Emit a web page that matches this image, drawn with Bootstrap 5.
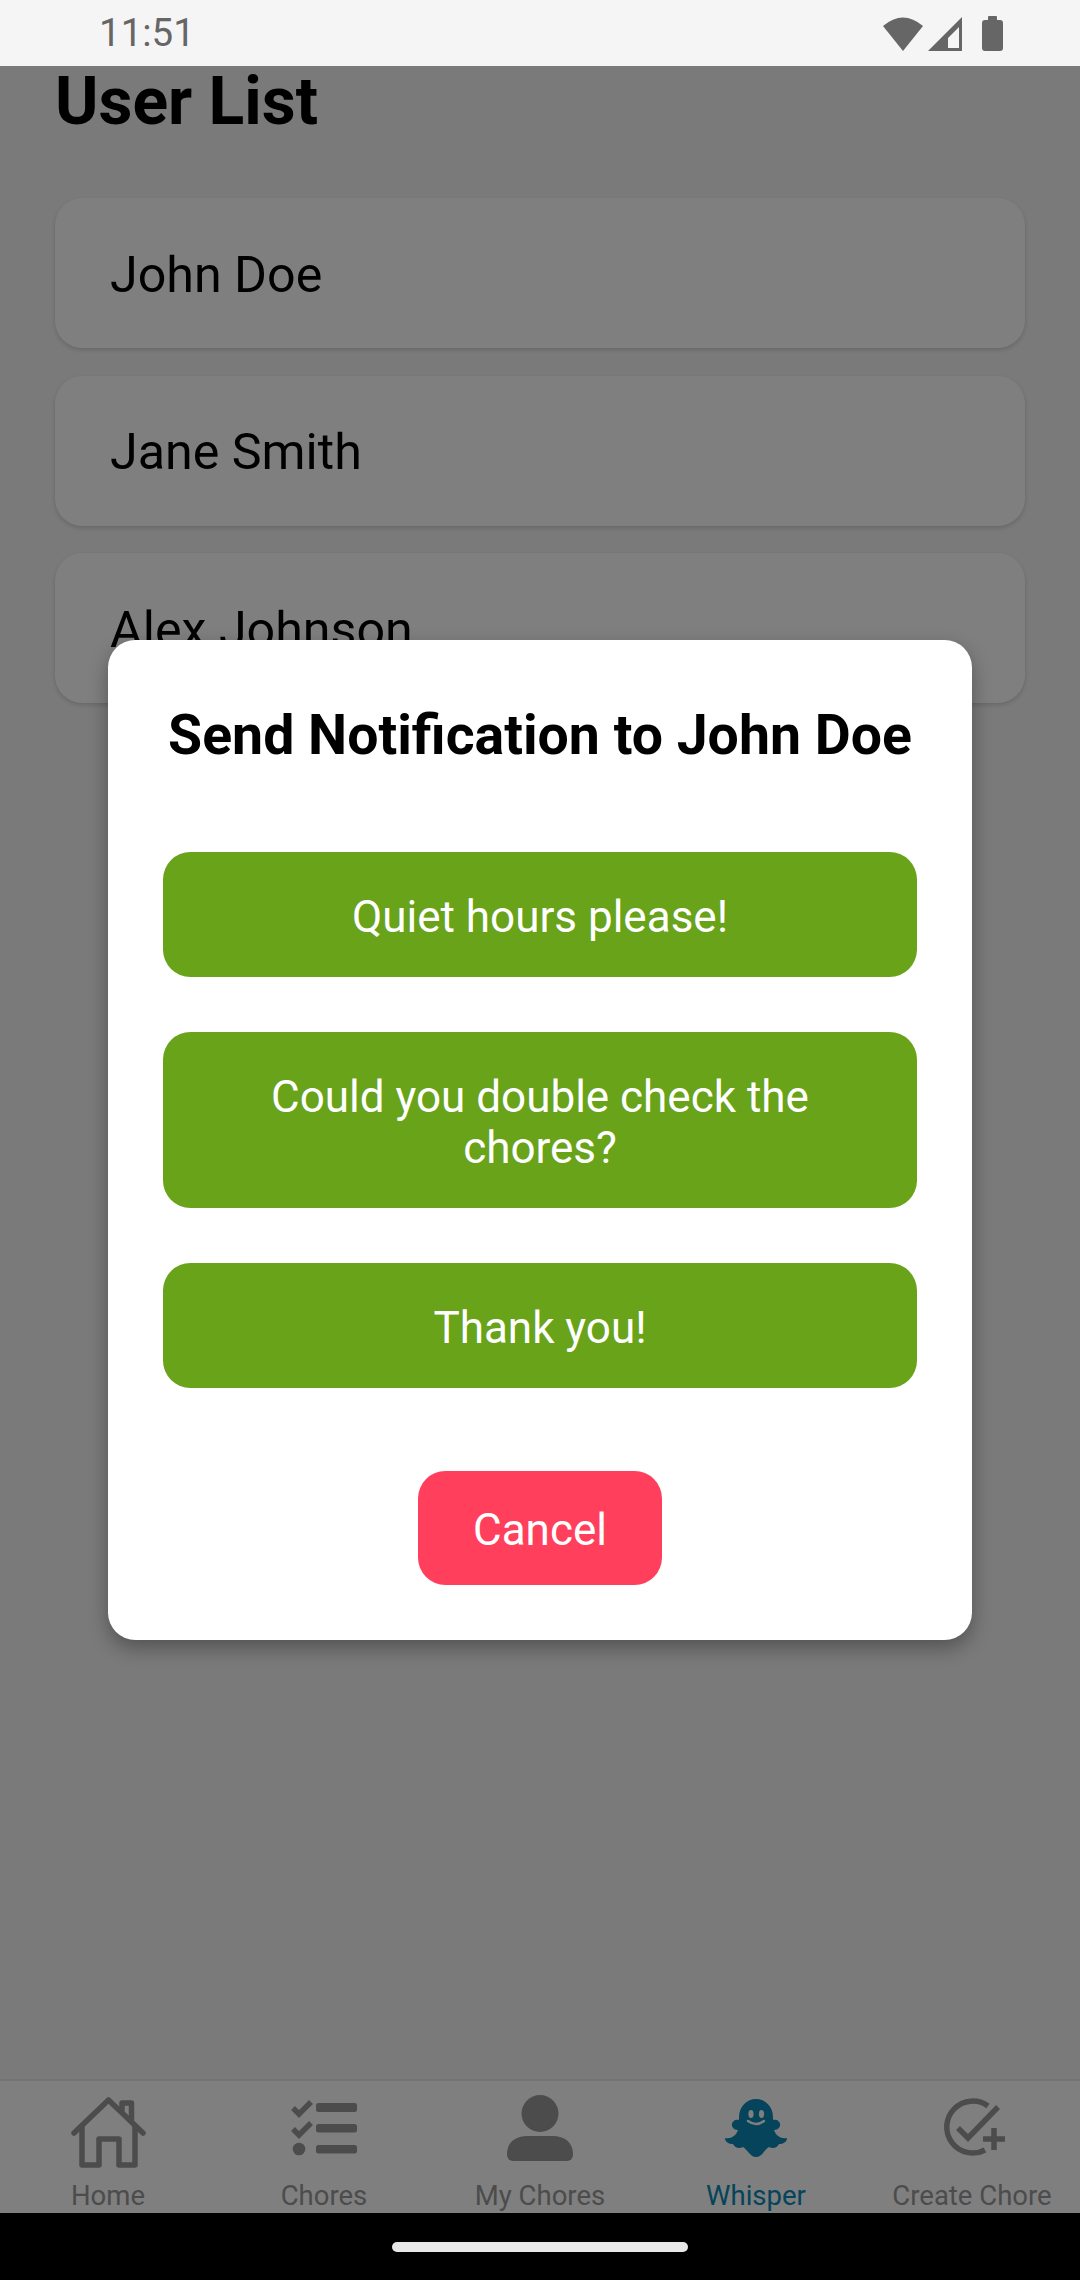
<!DOCTYPE html>
<html lang="en">
<head>
  <meta charset="UTF-8">
  <meta name="viewport" content="width=device-width, initial-scale=1.0">
  <title>User List</title>
  <link href="https://cdn.jsdelivr.net/npm/bootstrap@5.3.0/dist/css/bootstrap.min.css" rel="stylesheet">
  <style>
    body { font-family: Roboto, "Liberation Sans", sans-serif; background: #000; color: #000; }
    .status-strip { height: 66px; background: #f5f5f5; color: #666; padding: 0 77px 0 99px; font-size: 38.5px; line-height: 66px; }
    .status-strip svg { display: block; }
    .app-body { background: #f5f5f5; }
    .user-title { font-size: 66px; font-weight: 700; line-height: 71px; margin: 0 0 61px; }
    .user-row { height: 150px; border: 0; border-radius: 27.5px; padding-left: 55px; padding-top: 3px; font-size: 50.2px; background: #fff; box-shadow: 0 2px 5px rgba(0,0,0,.16); }
    .user-stack { gap: 27.5px; }
    .page-pad { padding: 0 55px; }
    .tab-strip { height: 134px; background: #fff; border-top: 2px solid #e6e6e6; }
    .tab-cell { width: 216px; color: #989898; font-size: 27.5px; line-height: 32px; padding-top: 11px; }
    .tab-cell svg { display: block; width: 80px; height: 80px; }
    .tab-cell span { margin-top: 8px; }
    .tab-on { color: #0a88b4; }
    .dim-layer { background: rgba(0,0,0,.5); }
    .send-box { width: 864px; height: 1000px; border: 0; border-radius: 27.5px; padding: 55px; background: #fff; box-shadow: 0 8px 20px rgba(0,0,0,.32); }
    .send-title { font-size: 55.4px; font-weight: 700; line-height: 81px; margin: 0 0 76px; text-align: center; white-space: nowrap; }
    .msg-stack { gap: 55px; }
    .msg-btn { --bs-btn-color: #fff; --bs-btn-bg: #68a31a; --bs-btn-hover-color: #fff; --bs-btn-hover-bg: #68a31a; --bs-btn-border-width: 0; --bs-btn-border-radius: 27.5px; --bs-btn-padding-x: 55px; --bs-btn-font-size: 44px; --bs-btn-line-height: 51px; padding-top: 40px; padding-bottom: 34px; }
    .stop-btn { --bs-btn-color: #fff; --bs-btn-bg: #ff3f5c; --bs-btn-hover-color: #fff; --bs-btn-hover-bg: #ff3f5c; --bs-btn-border-width: 0; --bs-btn-border-radius: 27.5px; --bs-btn-padding-x: 55px; --bs-btn-font-size: 44px; --bs-btn-line-height: 51px; padding-top: 34px; padding-bottom: 29px; margin-top: 83px; }
    .nav-strip { height: 67px; background: #000; }
    .gesture-pill { width: 296px; height: 10px; margin-top: 29px; background: #e8e8e8; border-radius: 5px; }
  </style>
</head>
<body>
  <div class="d-flex flex-column vh-100 overflow-hidden">
    <!-- Status bar -->
    <div class="status-strip d-flex justify-content-between align-items-center flex-shrink-0">
      <span>11:51</span>
      <div class="d-flex align-items-center">
        <svg width="120" height="36" viewBox="0 0 120 36" fill="#666">
          <path d="M0 11 Q20 -6 40 11 L20 36 Z"/>
          <path fill-rule="evenodd" d="M45 36 L79 2 V36 Z M65 33 H76 V12 L65 23 Z"/>
          <path d="M105 5 V2 a1 1 0 0 1 1-1 h7 a1 1 0 0 1 1 1 V5 h3 a3 3 0 0 1 3 3 V33 a3 3 0 0 1 -3 3 h-15 a3 3 0 0 1 -3-3 V8 a3 3 0 0 1 3-3 Z"/>
        </svg>
      </div>
    </div>

    <div class="app-body position-relative d-flex flex-column flex-grow-1">
      <div class="page-pad flex-grow-1">
        <h1 class="user-title">User List</h1>
        <div class="user-stack d-flex flex-column">
          <div class="card user-row justify-content-center">John Doe</div>
          <div class="card user-row justify-content-center">Jane Smith</div>
          <div class="card user-row justify-content-center">Alex Johnson</div>
        </div>
      </div>

      <!-- Tab bar -->
      <nav class="tab-strip d-flex flex-shrink-0">
        <div class="tab-cell d-flex flex-column align-items-center">
          <svg viewBox="0 0 80 80" fill="none" stroke="currentColor" stroke-width="5.5" stroke-linecap="round" stroke-linejoin="round">
            <path d="M6 41 L40.5 8 L75 41"/>
            <path d="M14 34 V73 H31 V47 H51 V73 H67 V34"/>
            <path d="M54 18 V11 H63.5 V28"/>
          </svg>
          <span>Home</span>
        </div>
        <div class="tab-cell d-flex flex-column align-items-center">
          <svg viewBox="0 0 80 80" fill="currentColor">
            <rect x="32" y="11" width="41" height="9" rx="2.5"/>
            <rect x="32" y="32" width="41" height="8.5" rx="2.5"/>
            <rect x="32" y="53" width="41" height="8.5" rx="2.5"/>
            <circle cx="15" cy="57" r="6.3"/>
            <path d="M9 16 L15 22 L27 10 M9 37 L15 43 L27 31" fill="none" stroke="currentColor" stroke-width="5.5"/>
          </svg>
          <span>Chores</span>
        </div>
        <div class="tab-cell d-flex flex-column align-items-center">
          <svg viewBox="0 0 80 80" fill="currentColor">
            <circle cx="40" cy="21.5" r="18.5"/>
            <path d="M7 62 C7 50 16 44 27 44 H53 C64 44 73 50 73 62 V63 a6 6 0 0 1 -6 6 H13 a6 6 0 0 1 -6 -6 Z"/>
          </svg>
          <span>My Chores</span>
        </div>
        <div class="tab-cell tab-on d-flex flex-column align-items-center">
          <svg viewBox="0 0 80 80" fill="currentColor">
            <path d="M23 25 A17 18 0 0 1 57 25 V28 C61 27 65 30 64 34 C63 37 60 38 58 38 C60 44 65 47 71 46 C71 50 67 52 63 52 C61 56 57 57 53 55 C49 57 46 65 40 65 C34 65 31 57 27 55 C23 57 19 56 17 52 C13 52 9 50 9 46 C15 47 20 44 22 38 C20 38 17 37 16 34 C15 30 19 27 23 28 Z"/>
            <ellipse cx="35" cy="22" rx="2.6" ry="4" fill="#fff"/>
            <ellipse cx="45.5" cy="22" rx="2.6" ry="4" fill="#fff"/>
            <path d="M32 29 Q40 35 48 29" fill="none" stroke="#fff" stroke-width="2.4" stroke-linecap="round"/>
          </svg>
          <span>Whisper</span>
        </div>
        <div class="tab-cell d-flex flex-column align-items-center">
          <svg viewBox="0 0 80 80" fill="none" stroke="currentColor" stroke-width="5.5">
            <path d="M56 14 A26 26 0 1 0 53 58"/>
            <path d="M26 36 L36 46 L66 15"/>
            <path d="M51 47 H73 M62 36 V58"/>
          </svg>
          <span>Create Chore</span>
        </div>
      </nav>

      <!-- Send notification dialog -->
      <div class="dim-layer position-absolute top-0 start-0 w-100 h-100 d-flex align-items-center justify-content-center">
        <div class="card send-box">
          <h2 class="send-title">Send Notification to John Doe</h2>
          <div class="msg-stack d-flex flex-column">
            <button type="button" class="btn msg-btn">Quiet hours please!</button>
            <button type="button" class="btn msg-btn">Could you double check the chores?</button>
            <button type="button" class="btn msg-btn">Thank you!</button>
          </div>
          <button type="button" class="btn stop-btn align-self-center">Cancel</button>
        </div>
      </div>
    </div>

    <!-- Android nav bar -->
    <div class="nav-strip d-flex justify-content-center flex-shrink-0">
      <div class="gesture-pill"></div>
    </div>
  </div>

  <script src="https://cdn.jsdelivr.net/npm/bootstrap@5.3.0/dist/js/bootstrap.bundle.min.js"></script>
</body>
</html>
